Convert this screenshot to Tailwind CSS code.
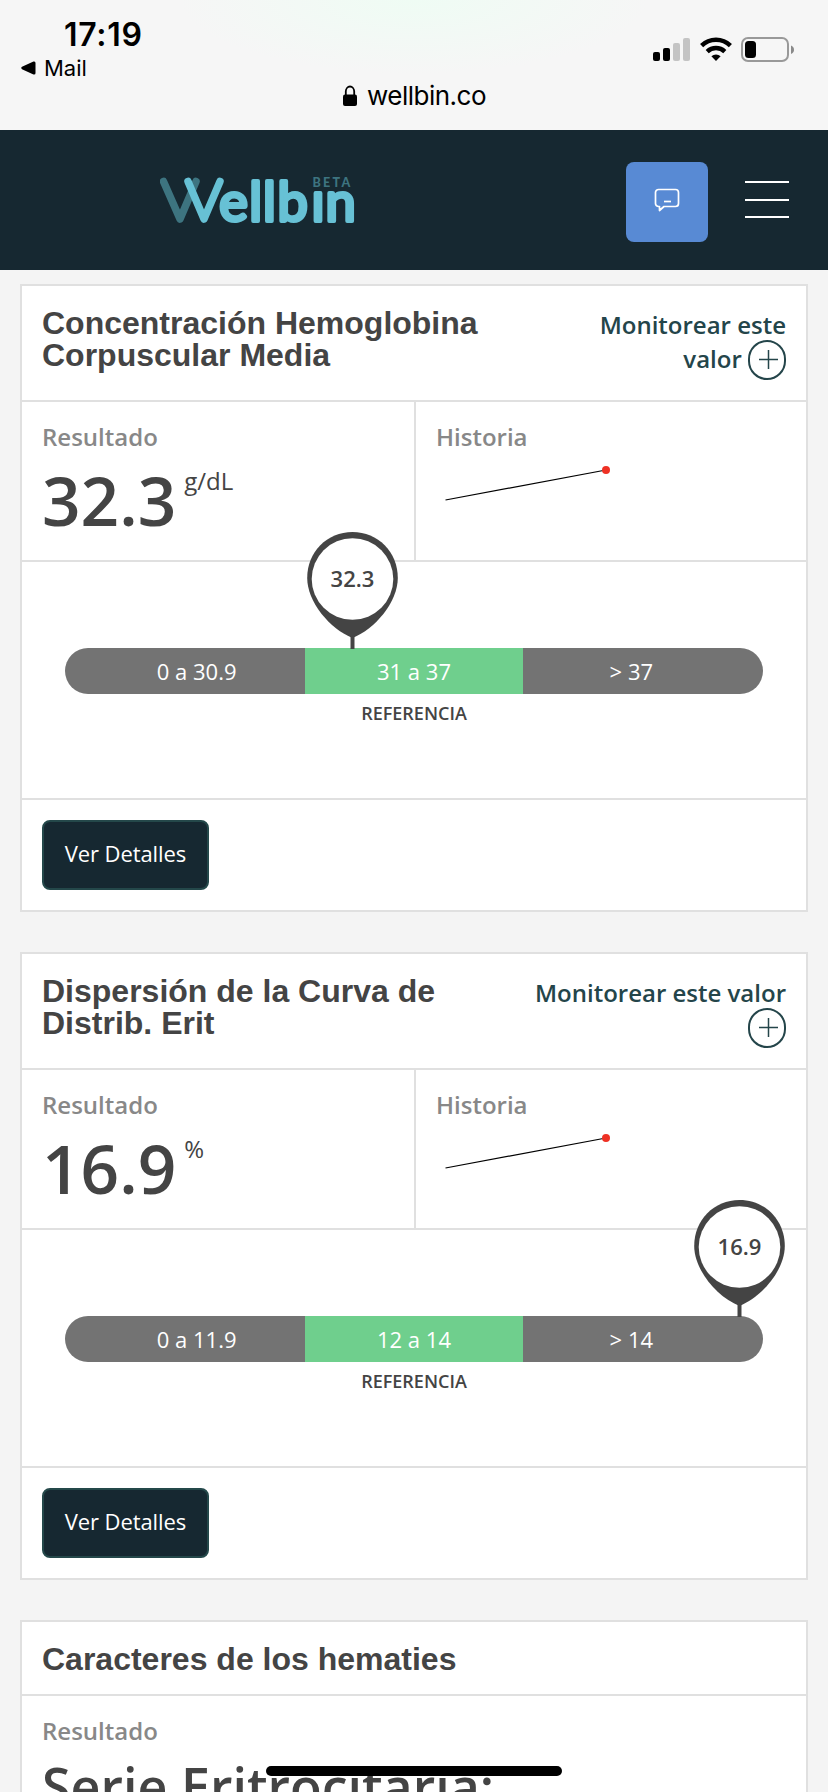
<!DOCTYPE html>
<html lang="es">

<head>
    <meta charset="UTF-8">
    <meta name="viewport" content="width=device-width, initial-scale=1.0">
    <title>Wellbin | Resultados</title>
    <script src="https://cdn.jsdelivr.net/npm/@tailwindcss/browser@4"></script>
</head>

<body class="h-screen overflow-hidden bg-[#f4f4f4] font-['Open_Sans',sans-serif] text-[#444444]">

    <!------------------ Status bar ------------------>

    <div class="h-[130px] bg-[#f6f6f6] bg-radial-[at_50%_0%] from-[#effcf4] to-[#f6f6f6] to-40% font-['Inter',sans-serif] text-black">
        <div class="flex h-[84px] justify-between pl-[21px] pr-[33px]">
            <div class="pt-[17px]">
                <div class="pl-[43px] text-[32px] leading-9 font-semibold tracking-[0.7px]">17:19</div>
                <div class="flex items-center gap-2 text-[22px] leading-[30px]">
                    <svg width="15" height="14" viewBox="0 0 15 14"><path d="M1 5.8 12.5.5Q14.5 0 14.5 2v10q0 2-2 1.5L1 8.2Q-.5 7 1 5.8Z"/></svg>
                    <span>Mail</span>
                </div>
            </div>
            <div class="flex gap-[9px] pt-9">
                <svg width="38" height="28" viewBox="0 0 38 28">
                    <rect x="0" y="16" width="7" height="9" rx="2"/>
                    <rect x="10" y="12" width="7" height="13" rx="2"/>
                    <rect x="20" y="7" width="7" height="18" rx="2" fill="#c4c4c4"/>
                    <rect x="30" y="2" width="7" height="23" rx="2" fill="#c4c4c4"/>
                </svg>
                <svg width="32" height="28" viewBox="0 0 32 28" fill="none" stroke="#000" stroke-width="4.4">
                    <path d="M1.6 9.6a20.5 20.5 0 0 1 28.8 0"/>
                    <path d="M7.2 15.6a12.6 12.6 0 0 1 17.6 0"/>
                    <path d="M16 25l-4.6-4.7a6.6 6.6 0 0 1 9.2 0z" fill="#000" stroke="none"/>
                </svg>
                <svg width="54" height="28" viewBox="0 0 54 28">
                    <rect x="1" y="2" width="46" height="23" rx="6" fill="none" stroke="#999" stroke-width="2"/>
                    <rect x="4" y="5" width="11" height="17" rx="3.5"/>
                    <path d="M50 9.5q3 1.2 3 4.2t-3 4.2z" fill="#8a8a8a"/>
                </svg>
            </div>
        </div>
        <div class="flex items-center justify-center gap-[10px] pl-px text-[26px] leading-6">
            <svg width="14" height="22" viewBox="0 0 14 22">
                <path d="M2.8 10V6.5a4.2 5 0 0 1 8.4 0V10" fill="none" stroke="#000" stroke-width="1.8"/>
                <rect x="0" y="9.5" width="14" height="11.5" rx="2"/>
            </svg>
            <span class="tracking-[-0.5px]">wellbin.co</span>
        </div>
    </div>

    <!------------------ Navbar ------------------>

    <div class="flex h-[140px] items-center justify-between bg-[#162831] pr-[39px] pl-[160px]">
        <svg width="200" height="80" viewBox="160 160 200 80" role="img" aria-label="Wellbin beta">
            <g fill="none" stroke-width="7.5" stroke-linecap="round" stroke-linejoin="round">
                <path d="M163.5 181.5 180 219 196 181.5" stroke="#3d7480"/>
                <path d="M188 181.5 204 219 220 181.5" stroke="#67c1d5"/>
            </g>
            <text y="220.5" x="219.3 249.3 262.9 277.5 311.5 325.5" font-family="Lato" font-size="54" fill="#67c1d5" stroke="#67c1d5" stroke-width="3.9" stroke-linejoin="round">ellbın</text>
            <text x="312.5" y="186.5" font-family="Lato" font-weight="900" font-size="12.5" letter-spacing="2.3" fill="#3d7480">BETA</text>
        </svg>
        <div class="flex items-center gap-[37px] pt-1">
            <button class="flex h-20 w-[82px] items-center justify-center rounded-lg bg-[#588ad4]">
                <svg width="26" height="24" viewBox="0 0 26 24" class="-mt-1" fill="none" stroke="#fff" stroke-width="1.7" stroke-linejoin="round">
                    <path d="M4.5 1.5h17a3 3 0 0 1 3 3v11a3 3 0 0 1-3 3H10l-4.500 4v-4h-1a3 3 0 0 1-3-3v-11a3 3 0 0 1 3-3z"/>
                    <path d="M10 13.5h7"/>
                </svg>
            </button>
            <button class="flex w-11 flex-col gap-[15.5px] pb-[5px]">
                <span class="h-0.5 w-full bg-white"></span>
                <span class="h-0.5 w-full bg-white"></span>
                <span class="h-0.5 w-full bg-white"></span>
            </button>
        </div>
    </div>

    <!------------------ Results ------------------>

    <div class="flex flex-col gap-10 px-5 pt-[14px]">

        <div class="border-2 border-[#e0e0e0] bg-white">
            <div class="flex h-[116px] justify-between border-b-2 border-[#e0e0e0] px-5 pt-[21px]">
                <h2 class="font-['Liberation_Sans',sans-serif] text-[32px] leading-8 font-bold">Concentración Hemoglobina<br>Corpuscular Media</h2>
                <a href="#" class="pt-px text-right text-2xl leading-[34px] font-semibold text-[#24454a]">Monitorear este<br>valor
                    <svg width="38" height="40" viewBox="0 0 38 40" class="-my-1.5 inline-block align-[-6px]" fill="none" stroke="#24454a">
                        <rect x="1" y="1" width="36" height="38" rx="18" stroke-width="2"/>
                        <path d="M11 19.5h19M20.5 10v19" stroke-width="1.5"/>
                    </svg>
                </a>
            </div>
            <div class="grid h-[160px] grid-cols-[394px_1fr] border-b-2 border-[#e0e0e0]">
                <div class="border-r-2 border-[#e0e0e0] px-5 pt-[19px]">
                    <div class="text-2xl font-semibold text-[#888888]">Resultado</div>
                    <div class="flex gap-2 pt-3">
                        <span class="pt-px text-[67.5px] leading-[68px] font-semibold">32.3</span>
                        <span class="text-2xl">g/dL</span>
                    </div>
                </div>
                <div class="px-5 pt-[19px]">
                    <div class="text-2xl font-semibold text-[#888888]">Historia</div>
                    <svg width="190" height="60" viewBox="0 0 190 60" class="mt-2">
                        <path d="M9.5 39 170 9" stroke="#000" stroke-width="1.2"/>
                        <circle cx="170" cy="9" r="4" fill="#ee3124"/>
                    </svg>
                </div>
            </div>
            <div class="h-[238px] border-b-2 border-[#e0e0e0] px-[43px] pt-[86px]">
                <div class="relative">
                    <div class="flex h-[46px] overflow-hidden rounded-full bg-[#737373] px-[23px] text-center text-[22px] leading-[46px] text-white">
                        <div class="flex-1">0 a 30.9</div>
                        <div class="flex-1 bg-[#6fcf8d]">31 a 37</div>
                        <div class="flex-1">&gt; 37</div>
                    </div>
                    <!-- marker -->
                    <div class="absolute -top-[116px] left-[242px] h-[118px] w-[91px]">
                        <svg width="91" height="118" viewBox="0 0 91 118">
                            <path d="M45.5 0C71 0 90.8 20 90.8 46c0 24-22.8 51-45.3 60C23 97 .2 70 .2 46 .2 20 20 0 45.5 0z" fill="#444"/>
                            <path d="M43.5 100h4v17h-4z" fill="#444"/>
                            <circle cx="45.5" cy="47" r="40.8" fill="#fff"/>
                        </svg>
                        <span class="absolute inset-x-0 top-[31px] text-center text-[22px] leading-[30px] font-semibold">32.3</span>
                    </div>
                </div>
                <div class="pt-[5px] text-center text-lg leading-7 font-semibold">REFERENCIA</div>
            </div>
            <div class="h-[110px] px-5 pt-5">
                <button class="h-[70px] w-[167px] rounded-lg border-2 border-[#24484a] bg-[#162831] pb-[3px] text-[22px] tracking-[-0.1px] text-white">Ver Detalles</button>
            </div>
        </div>

        <div class="border-2 border-[#e0e0e0] bg-white">
            <div class="flex h-[116px] justify-between border-b-2 border-[#e0e0e0] px-5 pt-[21px]">
                <h2 class="font-['Liberation_Sans',sans-serif] text-[32px] leading-8 font-bold">Dispersión de la Curva de<br>Distrib. Erit</h2>
                <a href="#" class="pt-px text-right text-2xl leading-[34px] font-semibold text-[#24454a]">Monitorear este valor<br>
                    <svg width="38" height="40" viewBox="0 0 38 40" class="-my-1.5 inline-block align-[-6px]" fill="none" stroke="#24454a">
                        <rect x="1" y="1" width="36" height="38" rx="18" stroke-width="2"/>
                        <path d="M11 19.5h19M20.5 10v19" stroke-width="1.5"/>
                    </svg>
                </a>
            </div>
            <div class="grid h-[160px] grid-cols-[394px_1fr] border-b-2 border-[#e0e0e0]">
                <div class="border-r-2 border-[#e0e0e0] px-5 pt-[19px]">
                    <div class="text-2xl font-semibold text-[#888888]">Resultado</div>
                    <div class="flex gap-2 pt-3">
                        <span class="pt-px text-[67.5px] leading-[68px] font-semibold">16.9</span>
                        <span class="text-2xl">%</span>
                    </div>
                </div>
                <div class="px-5 pt-[19px]">
                    <div class="text-2xl font-semibold text-[#888888]">Historia</div>
                    <svg width="190" height="60" viewBox="0 0 190 60" class="mt-2">
                        <path d="M9.5 39 170 9" stroke="#000" stroke-width="1.2"/>
                        <circle cx="170" cy="9" r="4" fill="#ee3124"/>
                    </svg>
                </div>
            </div>
            <div class="h-[238px] border-b-2 border-[#e0e0e0] px-[43px] pt-[86px]">
                <div class="relative">
                    <div class="flex h-[46px] overflow-hidden rounded-full bg-[#737373] px-[23px] text-center text-[22px] leading-[46px] text-white">
                        <div class="flex-1">0 a 11.9</div>
                        <div class="flex-1 bg-[#6fcf8d]">12 a 14</div>
                        <div class="flex-1">&gt; 14</div>
                    </div>
                    <!-- marker -->
                    <div class="absolute -top-[116px] left-[629px] h-[118px] w-[91px]">
                        <svg width="91" height="118" viewBox="0 0 91 118">
                            <path d="M45.5 0C71 0 90.8 20 90.8 46c0 24-22.8 51-45.3 60C23 97 .2 70 .2 46 .2 20 20 0 45.5 0z" fill="#444"/>
                            <path d="M43.5 100h4v17h-4z" fill="#444"/>
                            <circle cx="45.5" cy="47" r="40.8" fill="#fff"/>
                        </svg>
                        <span class="absolute inset-x-0 top-[31px] text-center text-[22px] leading-[30px] font-semibold">16.9</span>
                    </div>
                </div>
                <div class="pt-[5px] text-center text-lg leading-7 font-semibold">REFERENCIA</div>
            </div>
            <div class="h-[110px] px-5 pt-5">
                <button class="h-[70px] w-[167px] rounded-lg border-2 border-[#24484a] bg-[#162831] pb-[3px] text-[22px] tracking-[-0.1px] text-white">Ver Detalles</button>
            </div>
        </div>

        <div class="border-2 border-[#e0e0e0] bg-white">
            <div class="h-[74px] border-b-2 border-[#e0e0e0] px-5 pt-[21px]">
                <h2 class="font-['Liberation_Sans',sans-serif] text-[32px] leading-8 font-bold">Caracteres de los hematies</h2>
            </div>
            <div class="h-[160px] px-5 pt-[19px]">
                <div class="text-2xl font-semibold text-[#888888]">Resultado</div>
                <div class="pt-[15px] text-[52px] leading-[48px] font-semibold">Serie Eritrocitaria:</div>
            </div>
        </div>
    </div>

    <!------------------ Home indicator ------------------>

    <div class="fixed bottom-4 left-[266px] h-2.5 w-[296px] rounded-full bg-black"></div>

</body>

</html>
